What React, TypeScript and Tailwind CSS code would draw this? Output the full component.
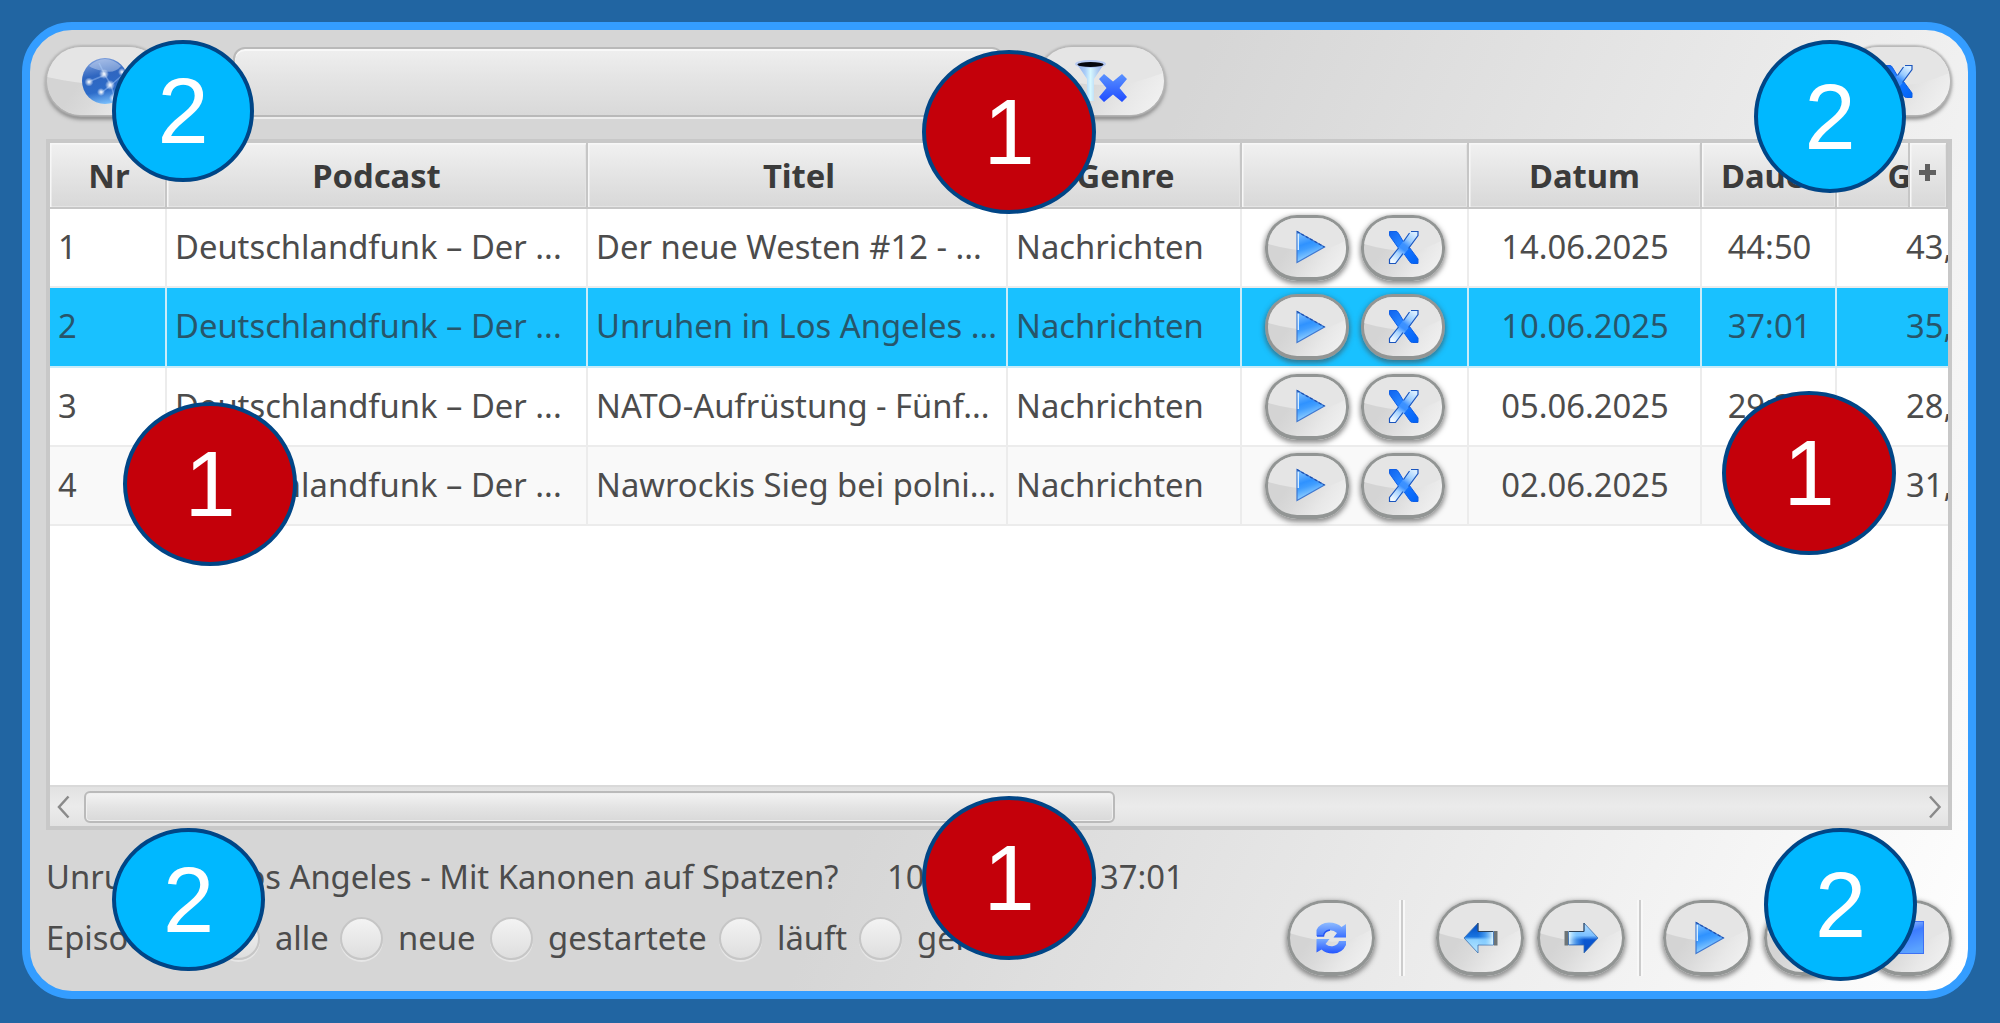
import React from "react";

const PlayIcon = () => (
  <svg width="30" height="34" viewBox="0 0 30 34">
    <defs>
      <linearGradient id="playFill" x1="0" y1="0" x2="0.3" y2="1">
        <stop offset="0" stopColor="#8ac8ff" />
        <stop offset="0.45" stopColor="#2f92ff" />
        <stop offset="0.6" stopColor="#3f9dff" />
        <stop offset="1" stopColor="#a5dcff" />
      </linearGradient>
    </defs>
    <path d="M1 1.5V32.5L28.5 17Z" fill="url(#playFill)" stroke="#3f78d0" strokeWidth="1.2" />
    <path d="M1 1.5L28.5 17" stroke="#1d4fae" strokeWidth="1.2" strokeDasharray="3 2" />
    <path d="M2.3 4V20" stroke="#d5ecff" strokeWidth="1.4" />
  </svg>
);

const CrossIcon = () => (
  <svg width="31" height="35" viewBox="0 0 31 35">
    <defs>
      <linearGradient id="crossBack" x1="0" y1="0" x2="1" y2="1">
        <stop offset="0" stopColor="#0f63ee" />
        <stop offset="0.35" stopColor="#2582ff" />
        <stop offset="0.6" stopColor="#1273ff" />
        <stop offset="1" stopColor="#0062f5" />
      </linearGradient>
      <linearGradient id="crossFront" x1="26" y1="3" x2="5" y2="32" gradientUnits="userSpaceOnUse">
        <stop offset="0" stopColor="#d8edff" />
        <stop offset="0.25" stopColor="#9accff" />
        <stop offset="0.42" stopColor="#3d92ff" />
        <stop offset="0.55" stopColor="#3a90ff" />
        <stop offset="0.72" stopColor="#a6d3ff" />
        <stop offset="1" stopColor="#f2faff" />
      </linearGradient>
    </defs>
    <path d="M1.5 1.5H8Q9.500 1.500 10.500 3.500L15.500 12L21.500 17.500L30 29V33.500H24.500Q22.500 33.500 21.500 31.500L15.500 23L10 17.500L1.500 5.500Z" fill="url(#crossBack)" stroke="#0f5fe6" strokeWidth="1" />
    <path d="M23 1.5H30V5.500L20.500 19L9.500 32Q8.500 33.500 7 33.500H1.500V29.500L11 17L21.500 2.500Z" fill="url(#crossFront)" />
    <path d="M21.500 3L15.500 11.500M23 1.500H30V5.500L20.500 18.500M10.500 18L1.500 29.500V33.500H7.500L15 23.500" fill="none" stroke="#1b55bd" strokeWidth="1.200" />
  </svg>
);

const GlobeIcon = () => (
  <svg width="48" height="48" viewBox="0 0 48 48">
    <defs>
      <linearGradient id="globeFill" x1="0.4" y1="0" x2="0.6" y2="1">
        <stop offset="0" stopColor="#7d9fdc" />
        <stop offset="0.35" stopColor="#2f66c0" />
        <stop offset="0.7" stopColor="#2d6cc9" />
        <stop offset="1" stopColor="#7fc4ff" />
      </linearGradient>
      <radialGradient id="globeSpark">
        <stop offset="0" stopColor="#fff" />
        <stop offset="1" stopColor="#fff" stopOpacity="0" />
      </radialGradient>
    </defs>
    <circle cx="24" cy="24" r="23" fill="url(#globeFill)" />
    <path d="M8 9Q24 -5 40 9Q34 17 22 14Q12 12 8 9Z" fill="#fff" opacity="0.32" />
    <path d="M7 25L24 18L30 28L20 36M24 18L18 6M30 28L44 16M30 28L34 42" fill="none" stroke="#b5d4ff" strokeWidth="1.500" opacity="0.4" />
    <circle cx="23" cy="17" r="5" fill="url(#globeSpark)" />
    <circle cx="8" cy="25" r="4.500" fill="url(#globeSpark)" />
    <circle cx="29" cy="28" r="5" fill="url(#globeSpark)" />
    <circle cx="20" cy="35" r="4" fill="url(#globeSpark)" />
    <circle cx="41" cy="15" r="4" fill="url(#globeSpark)" />
    <circle cx="33" cy="41" r="5" fill="url(#globeSpark)" />
  </svg>
);

const FunnelIcon = () => (
  <svg width="54" height="44" viewBox="0 0 54 44">
    <defs>
      <linearGradient id="funnelFill" x1="0" y1="0" x2="1" y2="0">
        <stop offset="0" stopColor="#8fa8e8" />
        <stop offset="0.3" stopColor="#a9cdf8" />
        <stop offset="0.5" stopColor="#d6f8ff" />
        <stop offset="1" stopColor="#8ba2e4" />
      </linearGradient>
      <linearGradient id="funnelCross" x1="0" y1="0" x2="0" y2="1">
        <stop offset="0" stopColor="#5a92ff" />
        <stop offset="1" stopColor="#1f4bff" />
      </linearGradient>
    </defs>
    <path d="M3 5L13 20V42H20V20L30 5Z" fill="url(#funnelFill)" />
    <ellipse cx="16.500" cy="5" rx="15.500" ry="4" fill="#a9c0f4" opacity="0.8" />
    <ellipse cx="16.500" cy="5.500" rx="13" ry="2.500" fill="#04060c" />
    <path d="M30 15L39 22.500L48 15L53 20L45.500 29L53 38L48 43L39 35.500L30 43L25 38L32.500 29L25 20Z" fill="url(#funnelCross)" />
  </svg>
);

const RefreshIcon = () => (
  <svg width="31" height="32" viewBox="0 0 31 32">
    <defs>
      <linearGradient id="refreshTop" x1="0" y1="0" x2="0" y2="1">
        <stop offset="0" stopColor="#8fbcff" />
        <stop offset="1" stopColor="#3a70ff" />
      </linearGradient>
      <linearGradient id="refreshBottom" x1="0" y1="0" x2="0" y2="1">
        <stop offset="0" stopColor="#78aaff" />
        <stop offset="1" stopColor="#2355ff" />
      </linearGradient>
    </defs>
    <path d="M0.500 14V8Q4 0.500 13 0.500Q21 0.500 25.500 5L30 2V15.500H17.500L21 11Q17 7.500 12.500 8.500Q8 9.500 7.500 14Z" fill="url(#refreshTop)" />
    <path d="M30 19V23Q26 31.500 17 31.500Q9.500 31.500 5.500 27.500L0.500 30.500V17H13.500L9.500 22Q13 25 17.500 24Q22 23 23 19Z" fill="url(#refreshBottom)" />
    <path d="M1 14H7.500Q8 9 14 8" fill="none" stroke="#2455f5" strokeWidth="1.500" />
  </svg>
);

/* The right arrow mirrors the left one, with its dark half at the bottom. */
const ArrowIcon = ({ right = false }: { right?: boolean }) => (
  <svg width="35" height="32" viewBox="0 0 35 32" className={right ? "-scale-x-100" : ""}>
    <defs>
      <linearGradient id="arrowL" x1="0" y1="0" x2="0" y2="1">
        <stop offset="0" stopColor="#0045bd" />
        <stop offset="0.46" stopColor="#1874e0" />
        <stop offset="0.56" stopColor="#8fd2ff" />
        <stop offset="1" stopColor="#b9e6ff" />
      </linearGradient>
      <linearGradient id="arrowR" x1="0" y1="0" x2="0" y2="1">
        <stop offset="0" stopColor="#b5e0ff" />
        <stop offset="0.42" stopColor="#7cc0ff" />
        <stop offset="0.56" stopColor="#0a57d2" />
        <stop offset="1" stopColor="#0a4fc4" />
      </linearGradient>
      <linearGradient id="arrowFade" x1="0" y1="0" x2="1" y2="0">
        <stop offset="0.1" stopColor="#58b0ff" stopOpacity="0" />
        <stop offset="0.55" stopColor="#7cc8ff" stopOpacity="0.5" />
        <stop offset="1" stopColor="#e2f8ff" stopOpacity="0.95" />
      </linearGradient>
    </defs>
    <path d="M1 16L15 1V9.500H30.500V23H15V31Z" fill={right ? "url(#arrowR)" : "url(#arrowL)"} stroke="#3b6fae" strokeWidth="0.8" />
    <path d="M13 10H30V22.500H13Z" fill="url(#arrowFade)" />
    <path d="M15 1V9.500H30" fill="none" stroke="#2e4258" strokeWidth="1" />
    <rect x="31" y="9" width="3.500" height="14.500" fill="#6d7476" />
  </svg>
);

const PauseIcon = () => (
  <svg width="30" height="32" viewBox="0 0 30 32">
    <rect x="2" y="1" width="9" height="30" fill="#3a86ff" />
    <rect x="19" y="1" width="9" height="30" fill="#3a86ff" />
  </svg>
);

const StopIcon = () => (
  <svg width="32" height="33" viewBox="0 0 32 33">
    <defs>
      <linearGradient id="stopFill" x1="0" y1="0" x2="0.3" y2="1">
        <stop offset="0" stopColor="#b5d3ff" />
        <stop offset="0.45" stopColor="#3d7cff" />
        <stop offset="1" stopColor="#5aa2ff" />
      </linearGradient>
    </defs>
    <rect x="0.500" y="0.500" width="31" height="32" fill="url(#stopFill)" stroke="#3d71f5" />
  </svg>
);

/* Glossy pill: a lighter upper part that ends in a soft curve. */
const Gloss = () => (
  <svg className="absolute inset-0 h-full w-full" viewBox="0 0 100 100" preserveAspectRatio="none">
    <path d="M0 0H100V38Q88 46 76 52Q66 56 52 56Q26 54 0 44Z" fill="#e5e5e5" />
  </svg>
);

const face =
  "relative flex shrink-0 items-center justify-center overflow-hidden bg-[linear-gradient(125deg,#d4d4d4_35%,#dadada_50%,#e8e8e8_72%,#f4f4f4_100%)]";

function Pill({ size, children }: { size: string; children: React.ReactNode }) {
  return (
    <button className={`${face} ${size} rounded-[36px] shadow-[0_0_2px_2px_#b8b8b8,0_3px_4px_1px_#777777]`}>
      <Gloss />
      <span className="relative flex">{children}</span>
    </button>
  );
}

function RingButton({ size, children }: { size: string; children: React.ReactNode }) {
  return (
    <button
      className={`${face} ${size} border-[3px] border-b-4 border-[#929594] shadow-[0_2px_5px_1px_rgba(70,70,70,0.6)]`}
    >
      <Gloss />
      <span className="relative flex">{children}</span>
    </button>
  );
}

const cols = "grid grid-cols-[117px_421px_420px_234px_227px_233px_135px_160px]";
const headerFace =
  "bg-[linear-gradient(#f1f1f1,#e4e4e4_50%,#d8d8d8)] shadow-[inset_1.5px_1.5px_0_#f7f7f7,inset_-1px_-1px_0_#e4e4e4] border-r-2 border-b-2 border-[#c6c6c6]";

const headers = [
  ["Nr", "pl-[3px]"],
  ["Podcast", ""],
  ["Titel", "pl-[4px]"],
  ["Genre", "pl-[3px]"],
  ["", ""],
  ["Datum", ""],
  ["Dauer", "pl-[4px]"],
  ["Größe", "pl-[44px]"],
];

const rows = [
  ["1", "Deutschlandfunk – Der ...", "Der neue Westen #12 - ...", "Nachrichten", "14.06.2025", "44:50", "43,2"],
  ["2", "Deutschlandfunk – Der ...", "Unruhen in Los Angeles ...", "Nachrichten", "10.06.2025", "37:01", "35,6"],
  ["3", "Deutschlandfunk – Der ...", "NATO-Aufrüstung - Fünf...", "Nachrichten", "05.06.2025", "29:36", "28,5"],
  ["4", "Deutschlandfunk – Der ...", "Nawrockis Sieg bei polni...", "Nachrichten", "02.06.2025", "32:47", "31,5"],
];

const rowTone = [
  "h-[79px] bg-white border-[#ececec]",
  "h-[80px] bg-[#19c1ff] border-[#c9ecf9] text-[#27566b]",
  "h-[79px] bg-white border-[#ececec]",
  "h-[79px] bg-[#f9f9f9] border-[#ececec]",
];

function Table() {
  return (
    <div className="relative flex h-[691px] w-[1906px] flex-col overflow-hidden border-4 border-[#c8c8c8] bg-white">
      <div className={`${cols} h-[66px] w-[1947px] shrink-0 font-bold text-[#3b3b3b]`}>
        {headers.map(([t, pad], i) => (
          <div key={i} className={`${headerFace} flex items-center justify-center pt-[3px] leading-none`}>
            <span className={pad}>{t}</span>
          </div>
        ))}
      </div>
      <div className={`${headerFace} absolute top-0 right-0 flex h-[66px] w-[40px] items-center justify-center border-l-2`}>
        <svg width="17" height="17" viewBox="0 0 17 17" className="-mt-[5px] mr-[2px]">
          <path d="M6 0H11V6H17V11H11V17H6V11H0V6H6Z" fill="#606060" />
        </svg>
      </div>
      {rows.map((r, i) => (
        <div key={i} className={`${cols} ${rowTone[i]} w-[1947px] shrink-0 border-b-2`}>
          {[r[0], r[1], r[2], r[3]].map((t, k) => (
            <div key={k} className="flex items-center overflow-hidden border-r-2 border-inherit pl-[8px] pb-[1px] whitespace-nowrap">
              {t}
            </div>
          ))}
          <div className="flex items-center justify-center gap-[12px] border-r-2 border-inherit pl-px">
            <RingButton size="h-[66px] w-[84px] rounded-[32px]">
              <span className="flex pl-[8px]">
                <PlayIcon />
              </span>
            </RingButton>
            <RingButton size="h-[66px] w-[84px] rounded-[32px]">
              <CrossIcon />
            </RingButton>
          </div>
          <div className="flex items-center justify-center border-r-2 border-inherit pb-[1px] pl-[1px]">{r[4]}</div>
          <div className="flex items-center justify-center border-r-2 border-inherit pb-[1px] pl-[2px]">{r[5]}</div>
          <div className="flex items-center pb-[1px] pl-[69px]">{r[6]}</div>
        </div>
      ))}
      <div className="mt-auto flex h-[41px] items-center border-t-2 border-[#d9d9d9] bg-[linear-gradient(#e2e2e2,#ebebeb_50%,#e2e2e2)]">
        <svg width="34" height="24" viewBox="0 0 34 24" className="shrink-0">
          <path d="M18.500 1.500L9 12L18.500 22.500" fill="none" stroke="#8a8a8a" strokeWidth="2.500" />
        </svg>
        <div className="h-[32px] w-[1031px] rounded-[6px] border-2 border-[#bababa] bg-[linear-gradient(#f3f3f3,#e4e4e4_50%,#d9d9d9)] shadow-[inset_0_0_0_1px_#efefef]" />
        <svg width="34" height="24" viewBox="0 0 34 24" className="ml-auto shrink-0">
          <path d="M16 1.500L25.500 12L16 22.500" fill="none" stroke="#8a8a8a" strokeWidth="2.500" />
        </svg>
      </div>
    </div>
  );
}

function Radio({ label, width }: { label: string; width: string }) {
  return (
    <label className={`${width} flex shrink-0 items-center`}>
      <span className="h-[43px] w-[43px] shrink-0 rounded-full border-2 border-[#c6c6c6] bg-[linear-gradient(#f3f3f3,#dedede)] shadow-[0_2px_0_#e6e6e6]" />
      <span className="pl-[15px] whitespace-nowrap">{label}</span>
    </label>
  );
}

const Divider = () => <span className="h-[76px] w-[6px] shrink-0 border-x-2 border-[#f8f8f8] bg-[#cccccc]" />;

const markers = [
  ["2", "left-[112px] top-[40px] w-[142px] h-[142px] bg-[#00b8ff]"],
  ["2", "left-[1754px] top-[40px] w-[152px] h-[153px] bg-[#00b8ff]"],
  ["2", "left-[112px] top-[828px] w-[153px] h-[143px] bg-[#00b8ff]"],
  ["2", "left-[1764px] top-[828px] w-[153px] h-[153px] bg-[#00b8ff]"],
  ["1", "left-[922px] top-[50px] w-[174px] h-[164px] bg-[#c4000a]"],
  ["1", "left-[123px] top-[402px] w-[174px] h-[164px] bg-[#c4000a]"],
  ["1", "left-[1722px] top-[391px] w-[174px] h-[164px] bg-[#c4000a]"],
  ["1", "left-[922px] top-[796px] w-[174px] h-[164px] bg-[#c4000a]"],
];

export default function App() {
  return (
    <div className="relative h-[1023px] w-[2000px] overflow-hidden bg-[#2165a2] p-[22px] font-['Noto_Sans',sans-serif] text-[32.75px] leading-none text-[#4c4c4c]">
      <div className="flex h-[977px] w-[1954px] flex-col rounded-[50px] border-8 border-[#349dff] bg-[linear-gradient(114deg,#d6d6d6_50%,#ffffff_100%)] bg-origin-border px-[16px]">
        <div className="flex h-[109px] shrink-0 items-start pt-[17px]">
          <div className="ml-[1px] flex">
            <Pill size="h-[68px] w-[116px]">
              <GlobeIcon />
            </Pill>
          </div>
          <div className="ml-[70px] h-[70px] w-[771px] rounded-[12px] border-2 border-[#b9b9b9] bg-[linear-gradient(#efefef,#e3e3e3_50%,#d9d9d9)] shadow-[inset_0_2px_0_#f8f8f8,0_2px_0_#ededed]" />
          <div className="ml-[34px] flex">
            <Pill size="h-[68px] w-[126px]">
              <span className="flex pr-[1px]">
                <FunnelIcon />
              </span>
            </Pill>
          </div>
          <div className="mr-[2px] ml-auto flex">
            <Pill size="h-[68px] w-[106px]">
              <CrossIcon />
            </Pill>
          </div>
        </div>
        <Table />
        <div className="flex">
          <div className="flex w-[1241px] flex-col">
            <div className="flex pt-[31px] whitespace-nowrap">
              <span className="w-[841px] tracking-[-0.02px]">Unruhen in Los Angeles - Mit Kanonen auf Spatzen?</span>
              <span className="w-[213px]">10.06.2025</span>
              <span>37:01</span>
            </div>
            <div className="mt-[23px] flex items-center">
              <span className="w-[171px]">Episoden:</span>
              <Radio label="alle" width="w-[123px]" />
              <Radio label="neue" width="w-[150px]" />
              <Radio label="gestartete" width="w-[229px]" />
              <Radio label="läuft" width="w-[140px]" />
              <Radio label="gehörte" width="w-[200px]" />
            </div>
          </div>
          <div className="flex items-start pt-[70px]">
            <RingButton size="h-[76px] w-[88px] rounded-[38px]"><RefreshIcon /></RingButton>
            <span className="mr-[31px] ml-[24px] flex"><Divider /></span>
            <RingButton size="h-[76px] w-[88px] rounded-[38px]"><ArrowIcon /></RingButton>
            <span className="w-[13px]" />
            <RingButton size="h-[76px] w-[88px] rounded-[38px]"><ArrowIcon right /></RingButton>
            <span className="mr-[20px] ml-[12px] flex"><Divider /></span>
            <RingButton size="h-[76px] w-[88px] rounded-[38px]"><span className="flex pl-[6px]"><PlayIcon /></span></RingButton>
            <span className="w-[13px]" />
            <RingButton size="h-[76px] w-[88px] rounded-[38px]"><PauseIcon /></RingButton>
            <span className="w-[12px]" />
            <RingButton size="h-[76px] w-[88px] rounded-[38px]"><StopIcon /></RingButton>
          </div>
        </div>
      </div>
      {markers.map(([n, place], i) => (
        <div
          key={i}
          className={`${place} absolute flex items-center justify-center rounded-[50%] border-4 border-[#004586] font-['Liberation_Sans',sans-serif] text-[92px] leading-none text-white`}
        >
          {n}
        </div>
      ))}
    </div>
  );
}
